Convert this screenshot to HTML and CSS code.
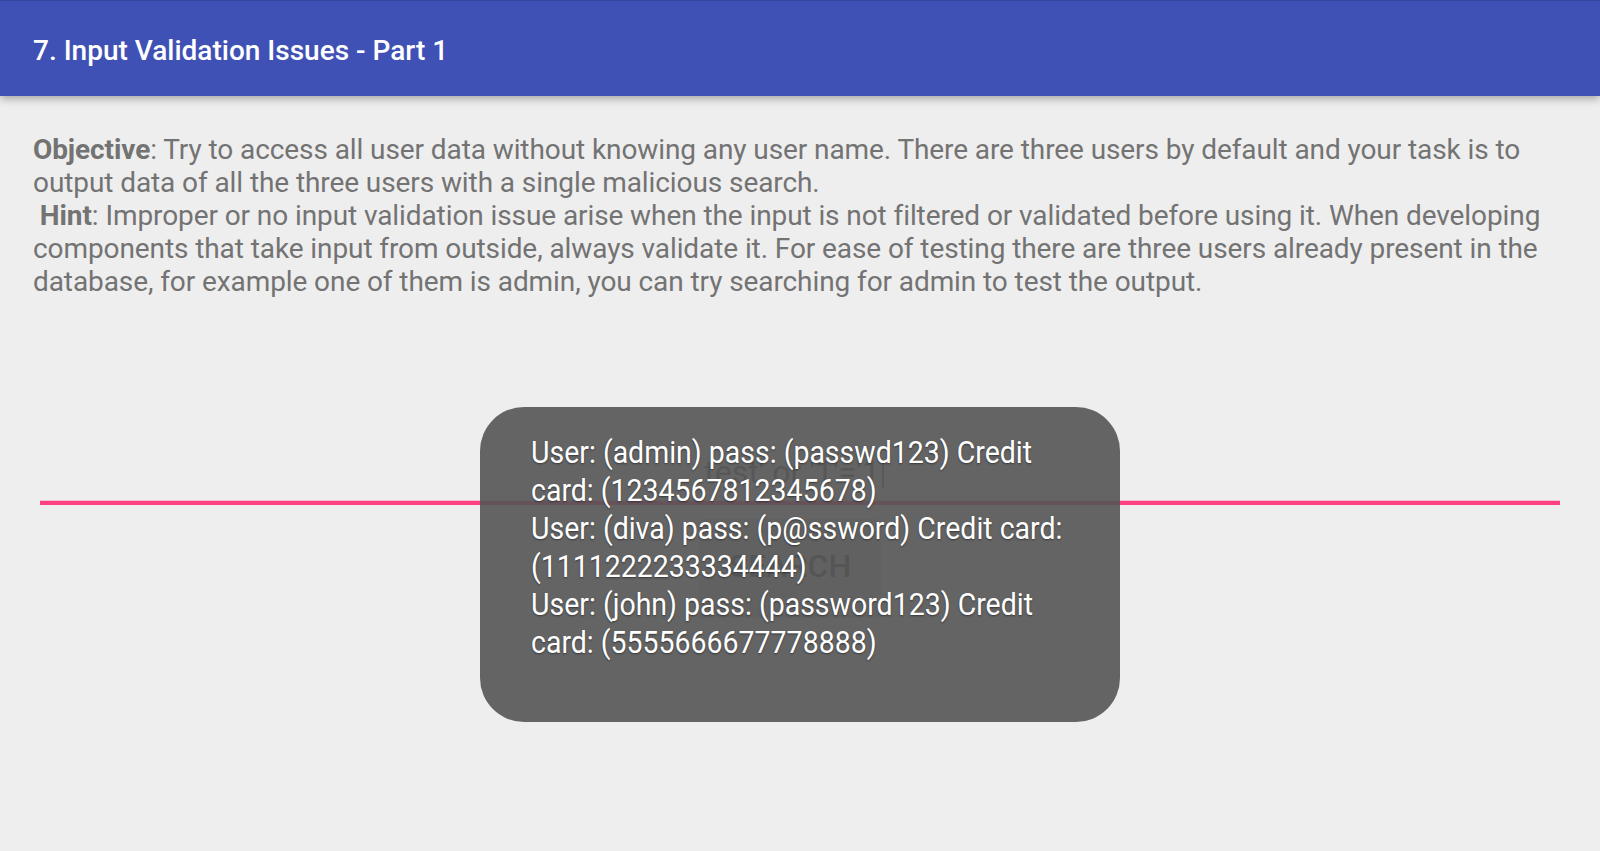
FILE: index.html
```html
<!DOCTYPE html>
<html lang="en">
<head>
<meta charset="utf-8">
<title>7. Input Validation Issues - Part 1</title>
<link rel="stylesheet" href="styles.css">
</head>
<body>
<header class="appbar">
  <h1 class="appbar-title">7. Input Validation Issues - Part 1</h1>
</header>
<main class="content">
  <div class="intro">
    <div class="line"><b>Objective</b>: Try to access all user data without knowing any user name. There are three users by default and your task is to</div>
    <div class="line">output data of all the three users with a single malicious search.</div>
    <div class="line">&nbsp;<b>Hint</b>: Improper or no input validation issue arise when the input is not filtered or validated before using it. When developing</div>
    <div class="line">components that take input from outside, always validate it. For ease of testing there are three users already present in the</div>
    <div class="line">database, for example one of them is admin, you can try searching for admin to test the output.</div>
  </div>
  <div class="field">
    <span class="field-text">test' or '1'='1</span><span class="cursor"></span>
  </div>
  <div class="actions">
    <button class="btn">SEARCH</button>
  </div>
</main>
<div class="toast">
  <div class="toast-line">User: (admin) pass: (passwd123) Credit</div>
  <div class="toast-line">card: (1234567812345678)</div>
  <div class="toast-line">User: (diva) pass: (p@ssword) Credit card:</div>
  <div class="toast-line">(1111222233334444)</div>
  <div class="toast-line">User: (john) pass: (password123) Credit</div>
  <div class="toast-line">card: (5555666677778888)</div>
</div>
</body>
</html>
```
FILE: styles.css
```css
html, body {
  margin: 0;
  padding: 0;
}
body {
  background: #eeeeee;
  font-family: Roboto, "Liberation Sans", sans-serif;
  width: 1600px;
  height: 851px;
  overflow: hidden;
  position: relative;
}
.appbar {
  border-top: 1px solid #34449f;
  background: #3f51b5;
  box-shadow: 0 3px 8px rgba(0, 0, 0, 0.3);
  display: flex;
  align-items: center;
  padding: 6px 0 0 33px;
  box-sizing: border-box;
  height: 96px;
  position: relative;
  z-index: 1;
}
.appbar-title {
  margin: 0;
  color: #ffffff;
  font-size: 28px;
  font-weight: 500;
  line-height: 32.8px;
}
.content {
  padding: 38px 33px 0 33px;
}
.intro {
  color: #737373;
  font-size: 28px;
  line-height: 32.9px;
  letter-spacing: -0.09px;
}
.intro .line {
  white-space: nowrap;
}
.intro b {
  font-weight: 700;
}
.field {
  margin: 155px 7px 0 7px;
  padding-bottom: 10px;
  border-bottom: 4px solid #ff4081;
  box-shadow: 0 -1px 0 rgba(255, 64, 129, 0.25) inset;
  text-align: center;
  font-size: 32px;
  line-height: 37.5px;
  color: #6a6a6a;
}
.field-text {
  display: inline-block;
  margin-left: -12px;
}
.cursor {
  display: inline-block;
  width: 2px;
  height: 28px;
  background: #8a8a8a;
  margin-left: 2px;
  vertical-align: -5px;
}
.actions {
  display: flex;
  justify-content: center;
  margin-top: 14px;
}
.btn {
  font-family: Roboto, "Liberation Sans", sans-serif;
  font-size: 32px;
  font-weight: 500;
  line-height: 37.5px;
  height: 96px;
  width: 180px;
  border: none;
  border-radius: 4px;
  background: #d6d7d7;
  color: #555555;
  margin-left: -20px;
  box-shadow: 0 2px 3px rgba(0, 0, 0, 0.25);
}
.toast {
  position: absolute;
  top: 407px;
  left: 50%;
  margin-left: -320px;
  width: 640px;
  height: 315px;
  box-sizing: border-box;
  padding: 26px 20px 0 51px;
  border-radius: 44px;
  background: rgba(85, 85, 85, 0.906);
  color: #ffffff;
  font-size: 32px;
  line-height: 38px;
  text-shadow: 0 1px 2px rgba(0, 0, 0, 0.45);
  z-index: 5;
}
.toast-line {
  white-space: nowrap;
  transform: scaleX(0.89);
  transform-origin: left center;
}
```
